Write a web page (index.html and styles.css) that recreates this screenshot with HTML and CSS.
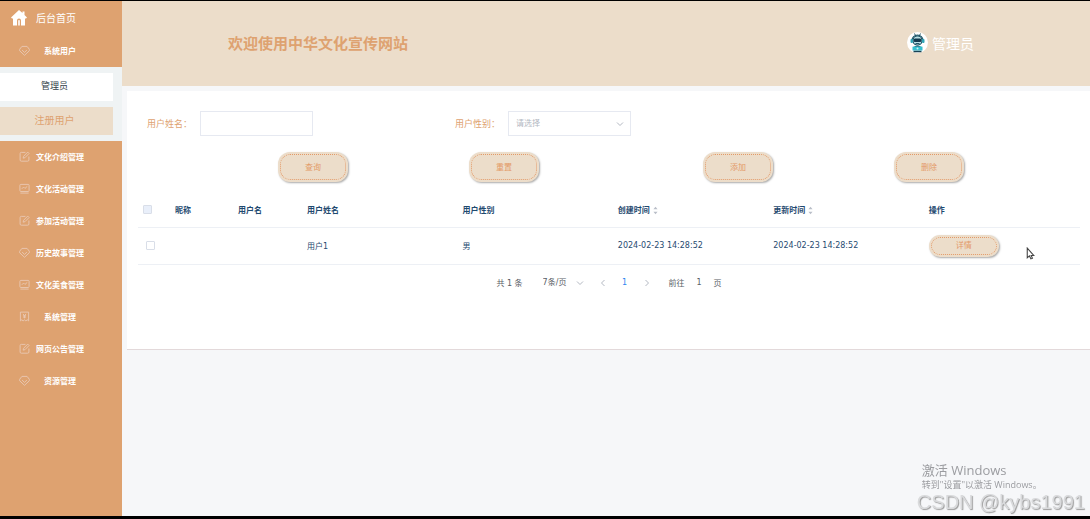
FILE: index.html
```html
<!DOCTYPE html>
<html lang="zh-CN">
<head>
  <meta charset="UTF-8">
  <meta name="viewport" content="width=device-width, initial-scale=1.0">
  <title>中华文化宣传网站</title>
  <link rel="stylesheet" href="styles.css">
</head>
<body>

  <!-- shared icons -->
  <svg class="sprite" width="0" height="0">
    <symbol id="icon-gem" viewBox="0 0 12 12">
      <path d="M3.200 1.500h5.600l2.500 3.200v1.600L6 11.200.7 6.300V4.700z"/>
      <path d="M3.400 5.600 6 8l2.600-2.400"/>
    </symbol>
    <symbol id="icon-edit" viewBox="0 0 12 12">
      <path d="M7 1.500H2.500a1.300 1.300 0 0 0-1.300 1.300v7a1.300 1.300 0 0 0 1.300 1.300h7a1.300 1.300 0 0 0 1.300-1.300V6"/>
      <path d="M4.500 7.800 5 5.800 9.500 1.200l1.500 1.500-4.500 4.600z"/>
    </symbol>
    <symbol id="icon-chart" viewBox="0 0 12 12">
      <rect x="1" y="1.500" width="10" height="7.800" rx="1"/>
      <path d="M3 6.400 5 4.400l1.500 1.500L9 3.700M1.500 11h9"/>
    </symbol>
    <symbol id="icon-ticket" viewBox="0 0 12 12">
      <path d="M1.500 1.200h9v9.600L9 9.600l-1.500 1.200L6 9.600l-1.500 1.200L3 9.600l-1.500 1.200z"/>
      <path d="M4.300 3.200 6 5l1.700-1.800M4.300 5.200h3.400M4.300 6.600h3.400M6 5v3"/>
    </symbol>
    <symbol id="icon-down" viewBox="0 0 8 8">
      <path d="M1 2.500 4 5.500l3-3"/>
    </symbol>
    <symbol id="icon-sort" viewBox="0 0 6 10">
      <path d="M3 .5 5.500 3.500h-5zM3 9.500.5 6.500h5z"/>
    </symbol>
  </svg>

  <div class="layout">
    <aside class="sidebar">
      <a class="home" href="#">
        <svg class="home-icon" viewBox="0 0 16 16">
          <path d="M8 0 0 7.500l1 1h1V15.500h4V10.500a2 2 0 0 1 4 0v5h4V8.500h1l1-1-2.500-2.400V1.500h-2v1.600z"/>
          <path d="M7.200 15.500v-4.700a.8.8 0 0 1 1.600 0v4.700z"/>
        </svg>
        <span>后台首页</span>
      </a>
      <nav>
        <a class="menu-item" href="#"><svg class="icon"><use href="#icon-gem"/></svg><span>系统用户</span></a>
        <div class="submenu">
          <a href="#">管理员</a>
          <a class="active" href="#">注册用户</a>
        </div>
        <a class="menu-item" href="#"><svg class="icon"><use href="#icon-edit"/></svg><span>文化介绍管理</span></a>
        <a class="menu-item" href="#"><svg class="icon"><use href="#icon-chart"/></svg><span>文化活动管理</span></a>
        <a class="menu-item" href="#"><svg class="icon"><use href="#icon-edit"/></svg><span>参加活动管理</span></a>
        <a class="menu-item" href="#"><svg class="icon"><use href="#icon-gem"/></svg><span>历史故事管理</span></a>
        <a class="menu-item" href="#"><svg class="icon"><use href="#icon-chart"/></svg><span>文化美食管理</span></a>
        <a class="menu-item" href="#"><svg class="icon"><use href="#icon-ticket"/></svg><span>系统管理</span></a>
        <a class="menu-item" href="#"><svg class="icon"><use href="#icon-edit"/></svg><span>网页公告管理</span></a>
        <a class="menu-item" href="#"><svg class="icon"><use href="#icon-gem"/></svg><span>资源管理</span></a>
      </nav>
    </aside>

    <div class="main">
      <header class="header">
        <h1>欢迎使用中华文化宣传网站</h1>
        <div class="user">
          <svg class="avatar" viewBox="0 0 42 42">
            <circle cx="21" cy="21" r="21" fill="#fff"/>
            <path d="M10 17a11 11 0 0 1 22 0" fill="none" stroke="#24596b" stroke-width="2.500"/>
            <path d="m15 3 2 4m10-4-2 4" stroke="#24596b" stroke-width="2"/>
            <rect x="12" y="8" width="18" height="18" rx="8" fill="#b9dfe5" stroke="#24596b" stroke-width="2"/>
            <rect x="13" y="13" width="16" height="7" rx="3" fill="#12394e"/>
            <rect x="7" y="14" width="5" height="8" rx="2" fill="#2fa5b5"/>
            <rect x="30" y="14" width="5" height="8" rx="2" fill="#2fa5b5"/>
            <path d="M17 23h8" stroke="#24596b" stroke-width="2"/>
            <path d="M12 36c0-6 3-9 9-9s9 3 9 9z" fill="#24596b"/>
            <rect x="11" y="29" width="20" height="8" rx="1" fill="#35c0d0"/>
            <path d="M13 39h16" stroke="#174254" stroke-width="3"/>
            <circle cx="21" cy="33" r="2" fill="#c9f2f4"/>
          </svg>
          <span>管理员</span>
        </div>
      </header>

      <section class="panel">
        <form>
          <div class="filters">
            <div class="field">
              <label for="username">用户姓名：</label>
              <input type="text" id="username" name="username">
            </div>
            <div class="field">
              <label for="gender">用户性别：</label>
              <div class="select-box">
                <select id="gender" name="gender">
                  <option value="">请选择</option>
                  <option>男</option>
                  <option>女</option>
                </select>
                <svg class="arrow"><use href="#icon-down"/></svg>
              </div>
            </div>
          </div>
          <div class="actions">
            <div class="action-group">
              <button type="button" class="btn">查询</button>
              <button type="button" class="btn">重置</button>
            </div>
            <div class="action-group">
              <button type="button" class="btn">添加</button>
              <button type="button" class="btn">删除</button>
            </div>
          </div>
        </form>

        <table>
          <colgroup>
            <col class="col-check">
            <col class="col-nick">
            <col class="col-account">
            <col class="col-data">
            <col class="col-data">
            <col class="col-data">
            <col class="col-data">
            <col>
          </colgroup>
          <thead>
            <tr>
              <th class="check"><input type="checkbox" class="check-all" aria-label="全选"></th>
              <th>昵称</th>
              <th>用户名</th>
              <th>用户姓名</th>
              <th>用户性别</th>
              <th>创建时间<svg class="sort"><use href="#icon-sort"/></svg></th>
              <th>更新时间<svg class="sort"><use href="#icon-sort"/></svg></th>
              <th>操作</th>
            </tr>
          </thead>
          <tbody>
            <tr>
              <td class="check"><input type="checkbox" aria-label="选择用户1"></td>
              <td></td>
              <td></td>
              <td>用户1</td>
              <td>男</td>
              <td>2024-02-23 14:28:52</td>
              <td>2024-02-23 14:28:52</td>
              <td><button type="button" class="btn btn-small">详情</button></td>
            </tr>
          </tbody>
        </table>

        <div class="pagination">
          <span class="total">共 1 条</span>
          <div class="page-size">
            <select aria-label="每页条数">
              <option>7条/页</option>
              <option>14条/页</option>
            </select>
            <svg class="arrow"><use href="#icon-down"/></svg>
          </div>
          <button type="button" class="pager" aria-label="上一页"><svg class="prev"><use href="#icon-down"/></svg></button>
          <button type="button" class="pager current">1</button>
          <button type="button" class="pager" aria-label="下一页"><svg class="next"><use href="#icon-down"/></svg></button>
          <label class="jump">前往 <input type="text" value="1"> 页</label>
        </div>
      </section>
    </div>
  </div>

  <svg class="cursor" viewBox="0 0 8 12"><path d="M1 1v9l2-1.800L4.400 11l1.400-.6L4.600 7.800H7z"/></svg>

  <div class="watermark">
    <p class="activate">激活 Windows</p>
    <p class="activate-tip">转到"设置"以激活 Windows。</p>
    <p class="csdn">CSDN @kybs1991</p>
  </div>

</body>
</html>
```

FILE: styles.css
```css
* {
  box-sizing: border-box;
}

body {
  margin: 0;
  min-height: 100vh;
  display: flex;
  border-top: 1px solid #000;
  border-bottom: 3px solid #000;
  background: #f6f7f9;
  color: #1f4a70;
  font-family: "DejaVu Sans", "Noto Sans CJK SC", sans-serif;
  font-size: 8px;
}

a {
  text-decoration: none;
}

input,
select,
button {
  margin: 0;
  padding: 0;
  font-family: inherit;
  font-size: 8px;
}

select {
  appearance: none;
}

.sprite {
  position: absolute;
}

.layout {
  flex: 1;
  display: flex;
}

/* sidebar */
.sidebar {
  width: 122px;
  flex-shrink: 0;
  background: #dea270;
}

.home {
  display: flex;
  align-items: center;
  gap: 9px;
  height: 34px;
  padding: 0 0 2px 11px;
  color: #fff;
  font-size: 10px;
}

.home-icon {
  width: 16px;
  height: 16px;
  margin-top: 2px;
  fill: #fff;
}

.menu-item {
  display: flex;
  align-items: center;
  gap: 4px;
  height: 32px;
  padding: 0 36px 2px 19px;
  color: #fff;
  font-weight: bold;
}

.menu-item span {
  flex: 1;
  text-align: center;
  white-space: nowrap;
}

.icon {
  width: 11px;
  height: 11px;
  fill: none;
  stroke: #e9c8b4;
  stroke-width: 1;
}

.submenu {
  display: flex;
  flex-direction: column;
  gap: 6px;
  padding: 6px 9px 6px 0;
  background: #eff3f4;
}

.submenu a {
  height: 28px;
  line-height: 27px;
  padding-right: 4px;
  background: #fff;
  color: #303d47;
  font-size: 9px;
  text-align: center;
}

.submenu .active {
  background: #ecddca;
  color: #dea270;
  font-size: 10px;
}

/* header */
.main {
  flex: 1;
  min-width: 0;
}

.header {
  display: flex;
  align-items: center;
  justify-content: space-between;
  height: 85px;
  padding: 0 116px 2px 106px;
  background: #ecddca;
}

.header h1 {
  margin: 0;
  color: #dea270;
  font-size: 15px;
}

.user {
  display: flex;
  align-items: center;
  gap: 4px;
  color: #fff;
  font-size: 14px;
}

.avatar {
  width: 21px;
  height: 21px;
}

/* content */
.panel {
  min-height: 259px;
  margin: 5px 0 0 5px;
  padding: 20px 10px 0 11px;
  background: #fff;
  border-bottom: 1px solid #e3d9da;
}

.filters {
  display: flex;
  gap: 142px;
  padding-left: 9px;
}

.field {
  display: flex;
  align-items: center;
}

.field label {
  width: 53px;
  color: #dea270;
  font-size: 9px;
}

.field input,
.field select {
  height: 25px;
  border: 1px solid #e6e9f1;
  background: #fff;
}

.field input {
  width: 113px;
  padding: 0 7px;
}

.field select {
  width: 123px;
  padding: 0 7px;
  color: #b3b8c2;
}

.select-box,
.page-size {
  display: flex;
  align-items: center;
}

.arrow {
  width: 8px;
  height: 8px;
  fill: none;
  stroke: #b3b8c2;
  pointer-events: none;
}

.select-box .arrow {
  margin-left: -15px;
}

.actions {
  display: flex;
  gap: 164px;
  padding: 16px 0 0 140px;
}

.action-group {
  display: flex;
  gap: 121px;
}

.btn {
  width: 70px;
  height: 30px;
  padding-bottom: 2px;
  border: 0;
  border-radius: 12px;
  outline: 1px dotted #e39a68;
  outline-offset: -3px;
  background: #ecddca;
  box-shadow: 1px 1px 2px #aaa;
  color: #e39a68;
  cursor: pointer;
}

.btn-small {
  display: block;
  height: 22px;
}

/* table */
table {
  width: 100%;
  margin-top: 10px;
  table-layout: fixed;
  border-collapse: collapse;
}

.col-check {
  width: 27px;
}

.col-nick {
  width: 63px;
}

.col-account {
  width: 69px;
}

.col-data {
  width: 16.5%;
}

th,
td {
  padding: 0 0 0 10px;
  border-bottom: 1px solid #edf0f5;
  text-align: left;
  white-space: nowrap;
}

th {
  height: 35px;
}

td {
  height: 37px;
}

.check {
  padding: 0 3px 0 0;
  text-align: center;
}

th.check {
  padding: 0 8px 0 0;
}

.check input {
  appearance: none;
  display: inline-block;
  width: 9px;
  height: 9px;
  border: 1px solid #d9dee8;
  border-radius: 1px;
  background: #fff;
  vertical-align: middle;
}

.check .check-all {
  background: #e9effa;
}

.sort {
  width: 5px;
  height: 9px;
  margin-left: 3px;
  fill: #b9bec8;
  vertical-align: middle;
}

/* pagination */
.pagination {
  display: flex;
  align-items: center;
  justify-content: center;
  height: 36px;
  color: #5a5e66;
}

.total {
  margin-right: 20px;
}

.page-size {
  margin-right: 8px;
}

.page-size select {
  width: 33px;
  border: 0;
  background: none;
  color: inherit;
}

.pager {
  width: 22px;
  border: 0;
  background: none;
  color: #5a5e66;
}

.pager svg {
  display: block;
  width: 8px;
  height: 8px;
  margin: 0 auto;
  fill: none;
  stroke: #b3b8c2;
}

.prev {
  transform: rotate(90deg);
}

.next {
  transform: rotate(-90deg);
}

.pager.current {
  color: #2f86ef;
}

.jump {
  display: flex;
  align-items: center;
  margin-left: 11px;
}

.jump input {
  width: 29px;
  border: 0;
  background: none;
  color: inherit;
  text-align: center;
}

/* overlays */
.cursor {
  position: absolute;
  top: 247px;
  left: 1026px;
  width: 9px;
  height: 13px;
  fill: #fff;
  stroke: #444;
  stroke-width: 1;
}

.watermark {
  position: fixed;
  right: 5px;
  bottom: 5px;
  color: #9b9ca0;
  font-family: "Open Sans", "Noto Sans CJK SC", sans-serif;
  pointer-events: none;
}

.watermark p {
  margin: 0;
  padding-left: 5px;
  white-space: nowrap;
}

.watermark .activate {
  font-size: 13px;
  line-height: 17px;
}

.watermark .activate-tip {
  font-size: 9px;
  line-height: 12px;
}

.watermark .csdn {
  padding: 0;
  color: #d9dadc;
  font-family: "Liberation Sans", Arial, sans-serif;
  font-size: 20px;
  line-height: 23px;
  text-shadow: 1px 1px 1px #999;
}
```
